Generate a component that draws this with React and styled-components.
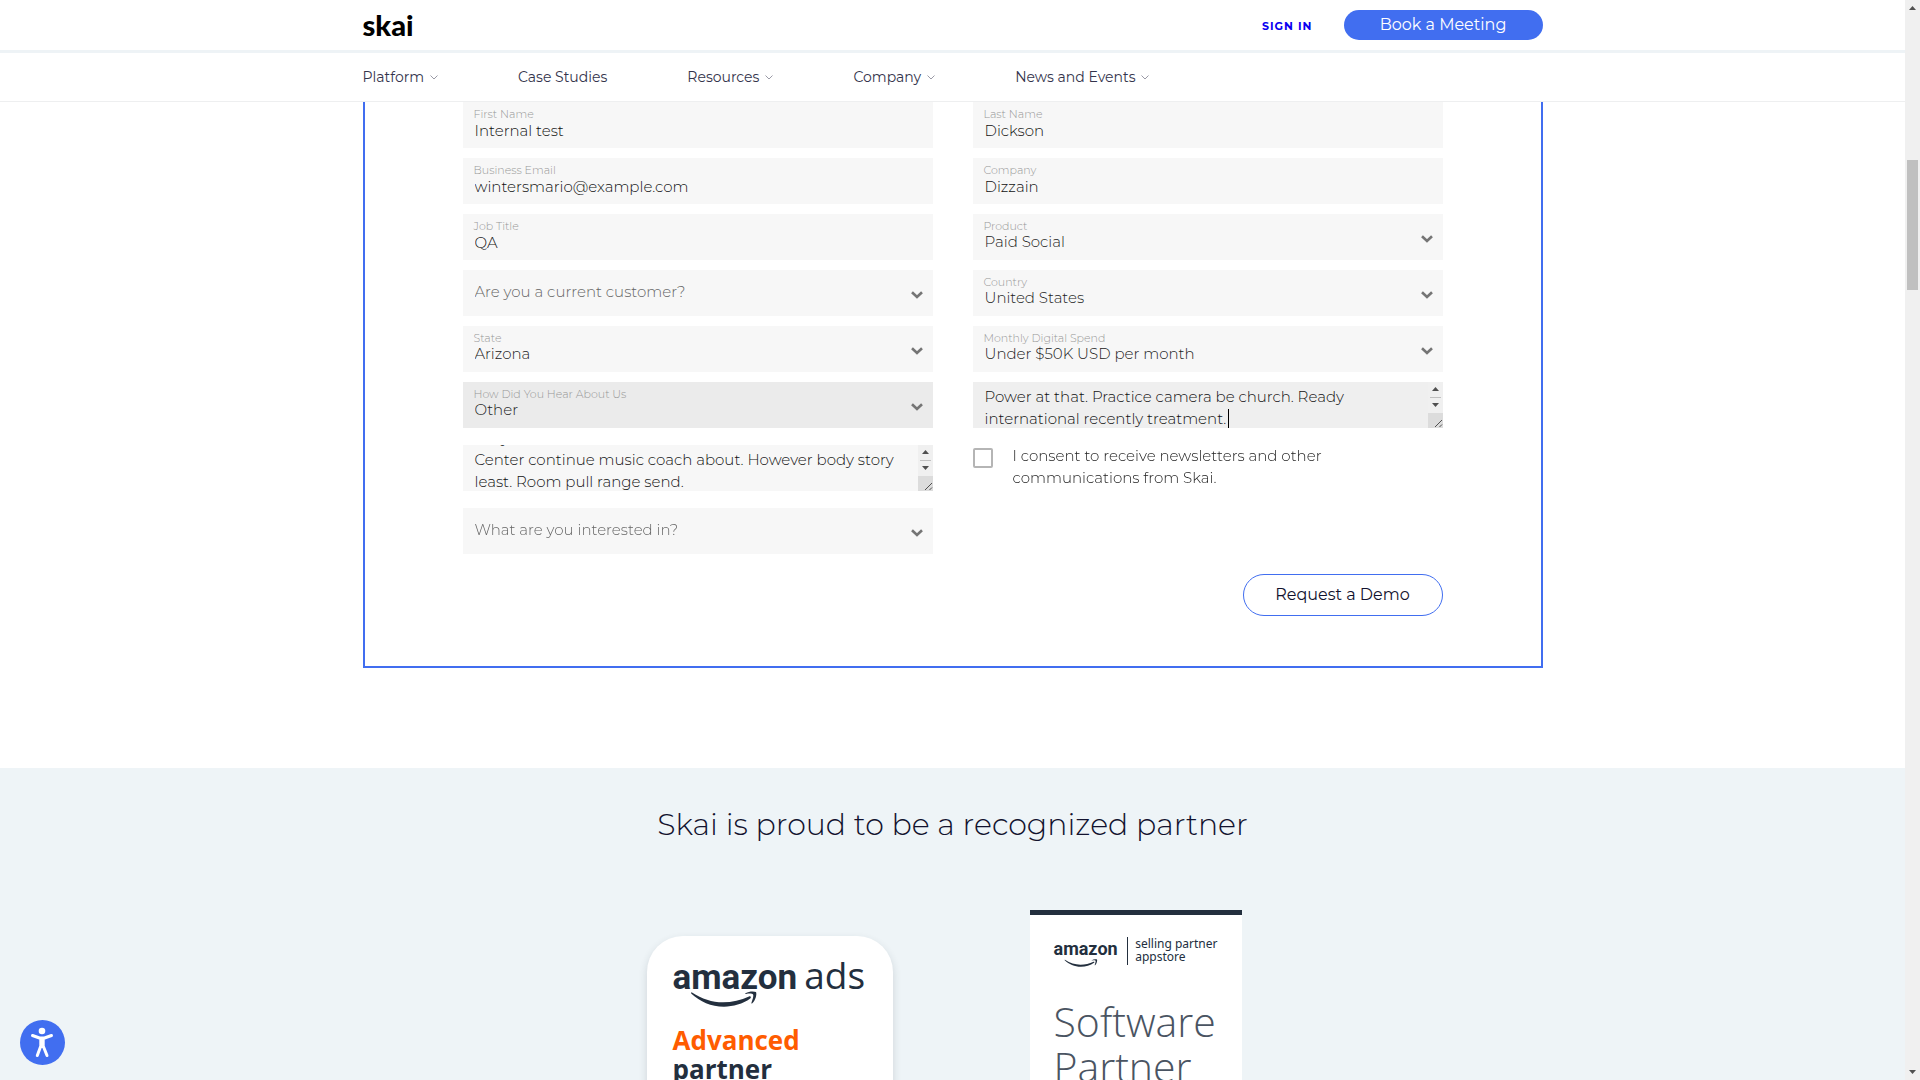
import React, { useEffect, useRef } from "react";
import styled, { createGlobalStyle } from "styled-components";

const Global = createGlobalStyle`
  * { box-sizing: border-box; }
  html, body { margin: 0; height: 100%; overflow: hidden; }
  body, button, input, select, textarea { font-family: Montserrat, "Open Sans", sans-serif; }
`;

const Window = styled.div`
  display: grid;
  grid-template-columns: 1fr 15px;
  height: 100vh;
  background: #fff;
`;
const Page = styled.div`
  display: flex;
  flex-direction: column;
  min-width: 0;
  height: 100vh;
  overflow: hidden;
`;
const Container = styled.div`
  width: 100%;
  max-width: 1180px;
  margin: 0 auto;
  display: flex;
  align-items: center;
`;

const TopBar = styled.header`
  display: flex;
  flex: none;
  height: 53px;
  border-bottom: 3px solid #eef3f6;
`;
const Logo = styled.a`
  margin-right: auto;
  font: 900 29px/30px Lato, sans-serif;
  color: #000;
  text-decoration: none;
`;
const SignIn = styled.a`
  margin-right: 31px;
  padding-top: 2px;
  font-size: 11px;
  font-weight: 700;
  letter-spacing: 1px;
  color: #0a00f0;
  text-decoration: none;
`;
const BookButton = styled.button`
  width: 199px;
  height: 30px;
  padding: 0 0 2px;
  border: 0;
  border-radius: 15px;
  background: #416ef0;
  color: #fff;
  font-size: 16px;
`;
const NavBar = styled.nav`
  display: flex;
  flex: none;
  height: 49px;
  border-bottom: 1px solid #eeeff0;
`;
const NavList = styled(Container)`
  gap: 80px;
`;
const NavLink = styled.a`
  display: flex;
  align-items: center;
  gap: 6px;
  font-size: 14px;
  line-height: 20px;
  color: #34344c;
  text-decoration: none;
`;

const Main = styled.main`
  flex: 1;
  min-height: 0;
  overflow: hidden;
`;
const FormPanel = styled.form`
  max-width: 1180px;
  margin: 0 auto 100px;
  padding: 0 98px 50px;
  border: 2px solid #416ef0;
  border-top: 0;
`;
const FieldGrid = styled.div`
  display: grid;
  grid-template-columns: 1fr 1fr;
  gap: 10px 40px;
`;
const Field = styled.div`
  display: grid;
  grid-template: 46px / 1fr;
  margin: ${(p) => (p.$spaced ? "7px 0" : "0")};
  > * { grid-area: 1 / 1; }
`;
const FieldLabel = styled.label`
  z-index: 1;
  justify-self: start;
  align-self: start;
  padding: 5px 11px 0;
  font-size: 11px;
  line-height: 14px;
  font-weight: 300;
  color: #979797;
  pointer-events: none;
`;
const TextInput = styled.input`
  width: 100%;
  height: 46px;
  padding: 11px 12px 0;
  border: 0;
  border-radius: 0;
  background: #f7f7f7;
  color: #111;
  font-size: 15px;
  font-weight: 300;
  outline: 0;
`;
const SelectInput = styled.select`
  appearance: none;
  width: 100%;
  height: 46px;
  padding: ${(p) => (p.$empty ? "0 12px 4px" : "9px 12px 0")};
  border: 0;
  border-radius: 0;
  background: ${(p) => (p.$active ? "#ebebeb" : "#f7f7f7")};
  color: ${(p) => (p.$empty ? "#666" : "#222")};
  font-size: 15px;
  font-weight: 300;
  outline: 0;
`;
const Arrow = styled.svg`
  justify-self: end;
  align-self: center;
  margin: 4px 10px 0 0;
  pointer-events: none;
`;
const Area = styled.textarea`
  width: 100%;
  height: 46px;
  padding: 4px 27px 0 12px;
  border: 0;
  border-radius: 0;
  background: ${(p) => (p.$active ? "#efefef" : "#f7f7f7")};
  color: #111;
  font-size: 15px;
  line-height: 22px;
  font-weight: 300;
  outline: 0;
  overflow-y: scroll;
  resize: none;
`;
const AreaScroll = styled.svg`
  justify-self: end;
  pointer-events: none;
`;
const Caret = styled.span`
  width: 1px;
  height: 19px;
  margin: 27px 0 0 255px;
  background: #000;
  pointer-events: none;
`;
const Consent = styled.label`
  display: flex;
  align-items: flex-start;
  gap: 20px;
  margin-top: 7px;
  font-size: 15px;
  line-height: 22px;
  font-weight: 300;
  color: #222;
`;
const Checkbox = styled.input`
  appearance: none;
  flex: none;
  width: 20px;
  height: 20px;
  margin: 3px 0 0;
  border: 2px solid #b5b5b5;
  border-radius: 2px;
  background: #fff;
`;
const ConsentText = styled.span`
  max-width: 360px;
`;
const Actions = styled.div`
  display: flex;
  justify-content: flex-end;
  margin-top: 20px;
`;
const DemoButton = styled.button`
  width: 200px;
  height: 42px;
  padding: 0 0 2px;
  border: 1px solid #416ef0;
  border-radius: 21px;
  background: #fff;
  color: #12122e;
  font-size: 16px;
`;

const Partners = styled.section`
  min-height: 600px;
  padding-top: 39px;
  background: #eef4f7;
`;
const PartnersTitle = styled.h2`
  margin: 0 0 67px;
  text-align: center;
  font-size: 30px;
  line-height: 36px;
  font-weight: 300;
  color: #12122e;
`;
const PartnerGrid = styled.div`
  display: grid;
  grid-template-columns: repeat(2, 366px);
  justify-content: center;
  justify-items: center;
`;
const AdsCard = styled.article`
  width: 246px;
  height: 300px;
  margin-top: 26px;
  padding: 18px 26px;
  border-radius: 36px;
  background: #fff;
  box-shadow: 0 4px 8px rgba(35, 47, 62, 0.16);
  color: #232f3e;
`;
const AdsLogo = styled.div`
  display: flex;
  align-items: baseline;
  gap: 7px;
  height: 37px;
  font: 700 35px/42px Roboto, sans-serif;
`;
const AdsWord = styled.span`
  font: 400 37px/42px "Open Sans", sans-serif;
`;
const AdsTitle = styled.p`
  margin: 19px 0 0;
  font: 700 26px/29px "Open Sans", sans-serif;
`;
const Accent = styled.span`
  display: block;
  color: #ff5c00;
`;
const Smile = styled.svg`
  display: block;
  margin-left: ${(p) => (p.$small ? "10px" : "18px")};
`;
const AppstoreCard = styled.article`
  width: 212px;
  height: 300px;
  padding: 22px 24px;
  border-top: 5px solid #232f3e;
  background: #fff;
  color: #232f3e;
`;
const AppstoreHead = styled.div`
  display: flex;
  height: 28px;
`;
const AppstoreLogo = styled.div`
  width: 75px;
  padding-top: 2px;
  border-right: 1px solid #232f3e;
  font: 700 18px/20px Roboto, sans-serif;
`;
const AppstoreName = styled.div`
  padding-left: 7px;
  white-space: nowrap;
  font: 400 12px/13px "Noto Sans", sans-serif;
`;
const AppstoreTitle = styled.p`
  margin: 34px 0 0;
  font: 300 41px/45px "Open Sans", sans-serif;
  color: #4a5462;
`;

const ScrollTrack = styled.div`
  display: flex;
  flex-direction: column;
  align-items: center;
  background: #f0f0f0;
`;
const ScrollThumb = styled.div`
  width: 11px;
  height: 130px;
  margin: 148px 0 auto;
  background: #c0c0c0;
`;
const Accessibility = styled.button`
  position: fixed;
  left: 20px;
  bottom: 15px;
  width: 45px;
  height: 45px;
  padding: 0;
  border: 0;
  border-radius: 50%;
  background: #416ef0;
`;

const NAV = [["Platform", true], ["Case Studies", false], ["Resources", true], ["Company", true], ["News and Events", true]];

function NavChevron() {
  return (
    <svg width="8" height="5" viewBox="0 0 8 5" fill="none" stroke="#9a9aa6">
      <path d="M.5 .5 4 4 7.5 .5" />
    </svg>
  );
}

function TextField({ id, label, value }) {
  return (
    <Field>
      <FieldLabel htmlFor={id}>{label}</FieldLabel>
      <TextInput id={id} defaultValue={value} />
    </Field>
  );
}

function SelectField({ id, label, value, placeholder, active, spaced }) {
  return (
    <Field $spaced={spaced}>
      {label && <FieldLabel htmlFor={id}>{label}</FieldLabel>}
      <SelectInput id={id} $empty={!value} $active={active} aria-label={label || placeholder}>
        <option>{value || placeholder}</option>
      </SelectInput>
      <Arrow width="12" height="8" viewBox="0 0 12 8" fill="none" stroke="#757575" strokeWidth="2.6">
        <path d="M1 1.2 6 6 11 1.2" />
      </Arrow>
    </Field>
  );
}

function AreaField({ label, value, active, spaced }) {
  const ref = useRef(null);
  useEffect(() => {
    ref.current.scrollTop = active ? 0 : 22;
  }, [active]);
  return (
    <Field $spaced={spaced}>
      <Area ref={ref} aria-label={label} defaultValue={value} $active={active} spellCheck={false} />
      {active && <Caret />}
      <AreaScroll width="15" height="46" viewBox="0 0 15 46">
        <path d="M0 0h15v31H0z" fill="#f0f0f0" />
        <path d="M4 9h7L7.500 5ZM4 21h7L7.500 25Z" fill="#505050" />
        <path d="M2 15h11v1H2z" fill="#c0c0c0" />
        <path d="M0 31h15v15H0z" fill="#dcdcdc" />
        <path d="M7 45 14 38M11.500 45 14 42.500" stroke="#505050" fill="none" />
      </AreaScroll>
    </Field>
  );
}

function SmileMark({ width, height, small }) {
  return (
    <Smile $small={small} width={width} height={height} viewBox="0 0 66 16" fill="#232f3e">
      <path d="M1 1.5C11 8 21 11.300 32 11.300 41 11.300 50 9.200 58 5.500 59.500 4.800 60.600 6.500 59.200 7.600 52 13 42 15.700 33 15.700 20 15.700 9 10.600.400 2.700-.2 2 .200 1 1 1.500Z" />
      <path d="M54.500 2.300C58 .100 63 .100 65 1 66 3 64.800 9 61.300 12.300 60.700 12.800 60.200 12.500 60.400 11.900 61.500 9 62.800 5 62.100 3.500 61 2.200 57.500 2.600 55 3 54.200 3 54 2.600 54.500 2.300Z" />
    </Smile>
  );
}

export default function App() {
  return (
    <Window>
      <Global />
      <Page>
        <TopBar>
          <Container>
            <Logo href="#">skai</Logo>
            <SignIn href="#">SIGN IN</SignIn>
            <BookButton>Book a Meeting</BookButton>
          </Container>
        </TopBar>
        <NavBar>
          <NavList>
            {NAV.map(([name, menu]) => (
              <NavLink href="#" key={name}>{name}{menu && <NavChevron />}</NavLink>
            ))}
          </NavList>
        </NavBar>
        <Main>
          <FormPanel onSubmit={(e) => e.preventDefault()}>
            <FieldGrid>
              <TextField id="first" label="First Name" value="Internal test" />
              <TextField id="last" label="Last Name" value="Dickson" />
              <TextField id="email" label="Business Email" value="wintersmario@example.com" />
              <TextField id="company" label="Company" value="Dizzain" />
              <TextField id="job" label="Job Title" value="QA" />
              <SelectField id="product" label="Product" value="Paid Social" />
              <SelectField id="customer" placeholder="Are you a current customer?" />
              <SelectField id="country" label="Country" value="United States" />
              <SelectField id="state" label="State" value="Arizona" />
              <SelectField id="spend" label="Monthly Digital Spend" value="Under $50K USD per month" />
              <SelectField id="source" label="How Did You Hear About Us" value="Other" active />
              <AreaField label="Details" value="Power at that. Practice camera be church. Ready international recently treatment." active />
              <AreaField label="Comments" value={"Only\nCenter continue music coach about. However body story least. Room pull range send."} spaced />
              <Consent>
                <Checkbox type="checkbox" />
                <ConsentText>I consent to receive newsletters and other communications from Skai.</ConsentText>
              </Consent>
              <SelectField id="interest" placeholder="What are you interested in?" />
            </FieldGrid>
            <Actions>
              <DemoButton type="submit">Request a Demo</DemoButton>
            </Actions>
          </FormPanel>
          <Partners>
            <PartnersTitle>Skai is proud to be a recognized partner</PartnersTitle>
            <PartnerGrid>
              <AdsCard>
                <AdsLogo>amazon<AdsWord>ads</AdsWord></AdsLogo>
                <SmileMark width={66} height={16} />
                <AdsTitle><Accent>Advanced</Accent>partner</AdsTitle>
              </AdsCard>
              <AppstoreCard>
                <AppstoreHead>
                  <AppstoreLogo>amazon<SmileMark width={34} height={8} small /></AppstoreLogo>
                  <AppstoreName>selling partner<br />appstore</AppstoreName>
                </AppstoreHead>
                <AppstoreTitle>Software<br />Partner</AppstoreTitle>
              </AppstoreCard>
            </PartnerGrid>
          </Partners>
        </Main>
      </Page>
      <ScrollTrack>
        <svg width="15" height="12" viewBox="0 0 15 12" fill="#505050"><path d="M4 10h7L7.500 6Z" /></svg>
        <ScrollThumb />
        <svg width="15" height="12" viewBox="0 0 15 12" fill="#505050"><path d="M4 2h7L7.500 6Z" /></svg>
      </ScrollTrack>
      <Accessibility aria-label="Accessibility options">
        <svg width="45" height="45" viewBox="0 0 45 45" fill="none" stroke="#fff" strokeLinecap="round" strokeLinejoin="round">
          <circle cx="22" cy="11" r="3.300" fill="#fff" stroke="none" />
          <path d="M12.500 15.500 19.500 18H24.500L31.500 15.500" strokeWidth="3" />
          <path d="M20.800 18.500V26L17.300 35.500M23.200 18.500V26L27 35.500M22 19V26.500" strokeWidth="3" />
        </svg>
      </Accessibility>
    </Window>
  );
}
